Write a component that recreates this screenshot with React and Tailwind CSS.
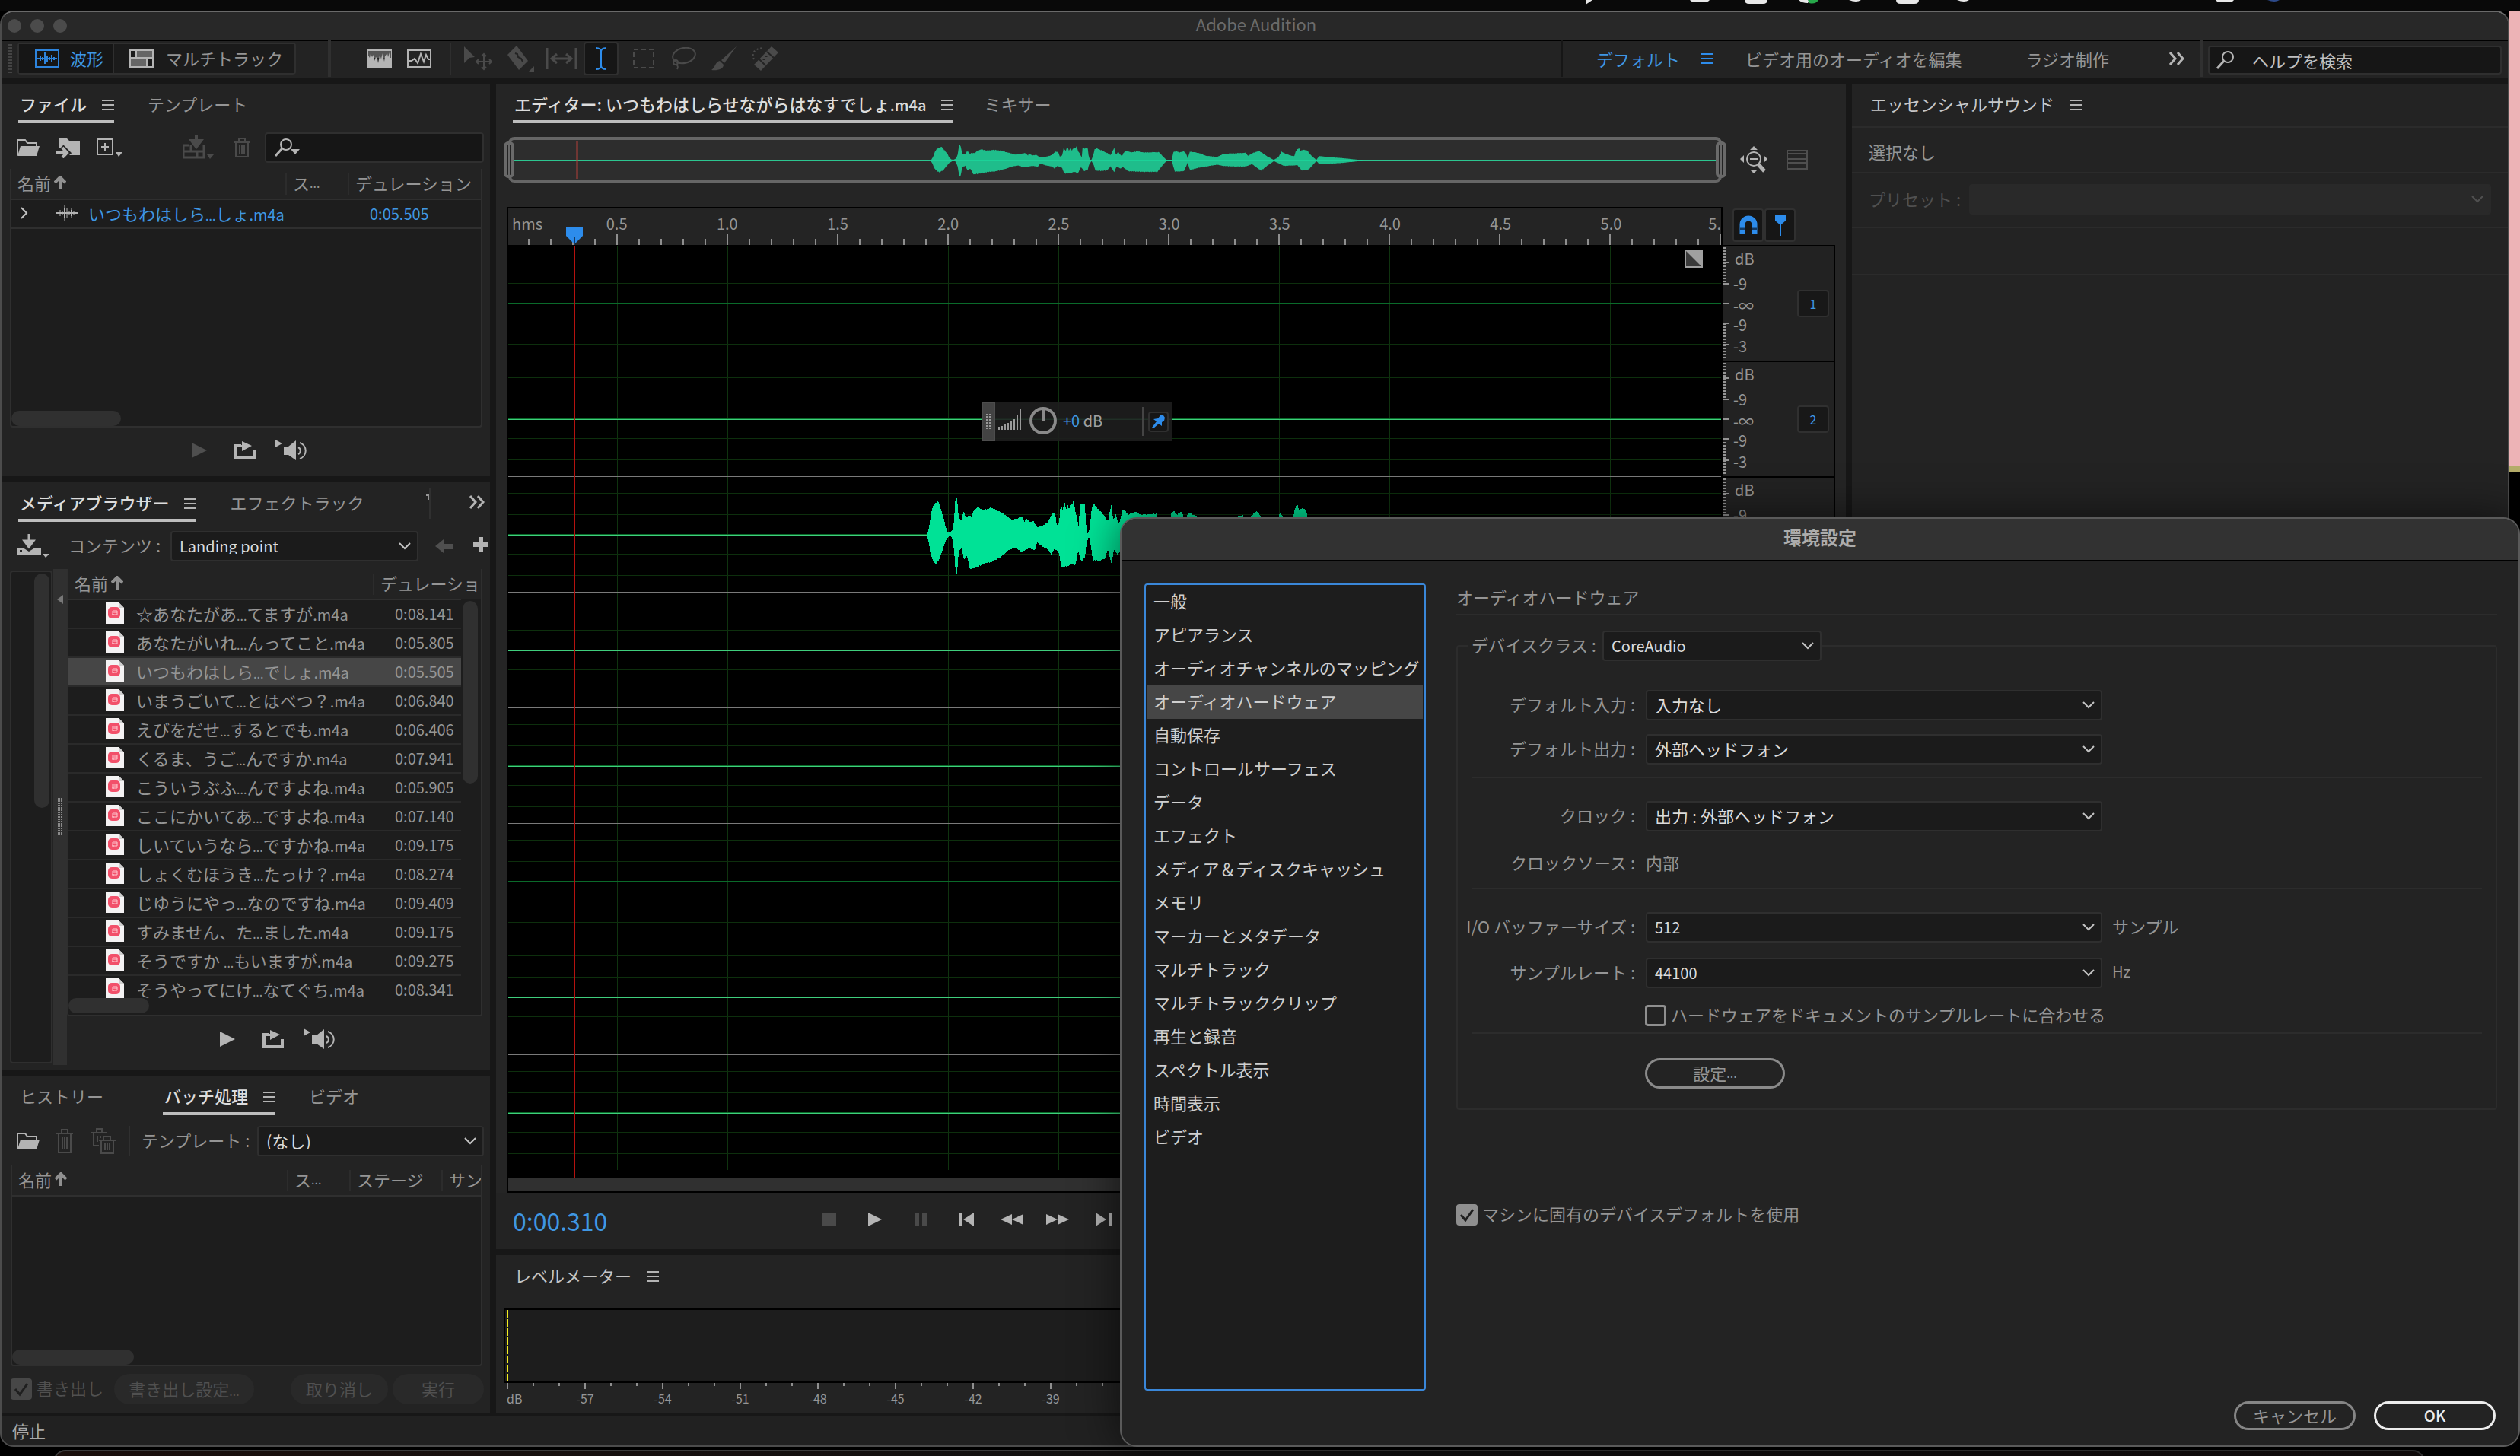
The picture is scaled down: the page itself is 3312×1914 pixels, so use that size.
import { useId } from 'react';

const FILES = [
  ['☆あなたがあ', 'てますが', '0:08.141'],
  ['あなたがいれ', 'んってこと', '0:05.805'],
  ['いつもわはしら', 'でしょ', '0:05.505'],
  ['いまうごいて', 'とはべつ？', '0:06.840'],
  ['えびをだせ', 'するとでも', '0:06.406'],
  ['くるま、うご', 'んですか', '0:07.941'],
  ['こういうぶふ', 'んですよね', '0:05.905'],
  ['ここにかいてあ', 'ですよね', '0:07.140'],
  ['しいていうなら', 'ですかね', '0:09.175'],
  ['しょくむほうき', 'たっけ？', '0:08.274'],
  ['じゆうにやっ', 'なのですね', '0:09.409'],
  ['すみません、た', 'ました', '0:09.175'],
  ['そうですか ', 'もいますが', '0:09.275'],
  ['そうやってにけ', 'なてぐち', '0:08.341'],
];

const CATEGORIES = [
  '一般',
  'アピアランス',
  'オーディオチャンネルのマッピング',
  'オーディオハードウェア',
  '自動保存',
  'コントロールサーフェス',
  'データ',
  'エフェクト',
  'メディア＆ディスクキャッシュ',
  'メモリ',
  'マーカーとメタデータ',
  'マルチトラック',
  'マルチトラッククリップ',
  '再生と録音',
  'スペクトル表示',
  '時間表示',
  'ビデオ',
];

const TIMES = ['0.5', '1.0', '1.5', '2.0', '2.5', '3.0', '3.5', '4.0', '4.5', '5.0'];
const LEVELS = [-57, -54, -51, -48, -45, -42, -39, -36, -33, -30, -27, -24, -21, -18, -15, -12];
const LANES = [0, 1, 2, 3, 4, 5, 6, 7];

// [x, amplitude] pairs of the voice clip, x in timeline units (290 per second)
const UPPER = [
  [550, 0], [551, 2], [554, 15], [556, 30], [559, 40], [565, 46], [569, 33], [573, 20], [575, 10], [578, 3],
  [581, 3], [584, 7], [586, 20], [588, 53], [589, 53], [591, 37], [592, 22], [596, 20], [598, 30], [600, 30],
  [601, 22], [604, 25], [609, 25], [612, 33], [617, 37], [625, 33], [634, 36], [644, 32], [652, 27], [662, 20],
  [670, 22], [675, 25], [679, 17], [680, 23], [685, 17], [690, 19], [695, 10], [702, 12], [709, 17], [712, 22],
  [715, 30], [719, 28], [721, 13], [724, 17], [726, 40], [729, 33], [731, 46], [733, 33], [735, 41], [737, 34],
  [739, 41], [742, 42], [743, 49], [745, 33], [748, 20], [750, 10], [751, 41], [758, 41], [759, 17], [761, 2],
  [763, 3], [765, 17], [767, 37], [770, 41], [775, 35], [784, 25], [788, 18], [790, 27], [793, 43], [794, 27],
  [796, 20], [798, 30], [800, 22], [803, 15], [807, 32], [810, 33], [815, 27], [824, 31], [832, 27], [852, 28],
  [854, 23], [858, 12], [862, 2], [869, 2], [871, 28], [875, 32], [879, 27], [885, 31], [888, 23], [890, 8],
  [893, 30], [905, 25], [914, 16], [929, 12], [937, 22], [959, 25], [966, 26], [970, 16], [976, 25], [984, 32],
  [989, 25], [995, 14], [1004, 2], [1010, 12], [1014, 30], [1018, 24], [1027, 16], [1031, 15], [1033, 32],
  [1037, 42], [1039, 33], [1044, 36], [1049, 33], [1050, 25], [1053, 18], [1060, 2], [1064, 15], [1077, 11],
  [1091, 9], [1106, 5], [1117, 2], [1121, 0],
];

const LOWER = [
  [550, 0], [553, 12], [555, 26], [559, 36], [562, 40], [567, 32], [571, 20], [575, 8], [579, 2], [583, 3],
  [586, 20], [588, 52], [590, 52], [592, 22], [596, 18], [599, 33], [603, 28], [607, 47], [611, 45], [617, 43],
  [625, 39], [636, 36], [647, 30], [658, 20], [666, 17], [674, 23], [685, 18], [692, 21], [695, 10], [702, 16],
  [710, 20], [714, 27], [718, 18], [724, 25], [727, 44], [731, 43], [736, 42], [740, 38], [745, 42], [749, 22],
  [753, 36], [758, 30], [760, 12], [763, 2], [766, 16], [768, 34], [777, 35], [784, 32], [788, 20], [793, 39],
  [796, 20], [801, 27], [804, 22], [812, 36], [833, 38], [850, 38], [858, 12], [862, 2], [869, 2], [873, 37],
  [885, 36], [890, 8], [893, 32], [905, 24], [929, 14], [937, 18], [949, 20], [967, 20], [975, 12], [987, 34],
  [995, 18], [1004, 2], [1017, 18], [1035, 16], [1041, 34], [1050, 30], [1060, 2], [1064, 12], [1091, 9],
  [1117, 2], [1121, 0],
];

const amp = (points, x) => {
  const i = points.findIndex((p) => p[0] >= x);
  if (i <= 0) return 0;
  const [x0, a0] = points[i - 1];
  const [x1, a1] = points[i];
  return a0 + ((a1 - a0) * (x - x0)) / (x1 - x0);
};

const rough = (x) => 0.98 + 0.05 * Math.sin(x * 12.9898) * Math.cos(x * 3.7);

const wavePath = (cy, scale) => {
  const top = [];
  const bottom = [];
  for (let x = 550; x <= 1121; x += 1) {
    top.push(`${x},${(cy - amp(UPPER, x) * scale * rough(x)).toFixed(1)}`);
    bottom.unshift(`${x},${(cy + amp(LOWER, x) * scale * rough(x + 1)).toFixed(1)}`);
  }
  return `M${top.join('L')}L${bottom.join('L')}Z`;
};

const Svg = ({ w, h, className = '', children }) => (
  <svg width={w} height={h} viewBox={`0 0 ${w} ${h}`} fill="none" stroke="currentColor" strokeWidth="2" className={`shrink-0 ${className}`} aria-hidden="true">
    {children}
  </svg>
);

const Menu = ({ className = '' }) => (
  <Svg w={16} h={16} className={className}>
    <path d="M0 2h16M0 8h16M0 14h16" />
  </Svg>
);

const Chevron = ({ className = '' }) => (
  <Svg w={16} h={10} className={className}>
    <path d="M1 1l7 7 7-7" />
  </Svg>
);

const More = () => (
  <Svg w={22} h={18}>
    <path d="M2 1l7 8-7 8M12 1l7 8-7 8" strokeWidth="3" />
  </Svg>
);

const Folder = () => (
  <Svg w={30} h={24} className="text-[#b4b4b4]">
    <path d="M1 22V2h10l3 4h12v4" />
    <path d="M5 10h25l-4 13H1z" fill="currentColor" stroke="none" />
  </Svg>
);

const Trash = ({ h = 26 }) => (
  <Svg w={22} h={h} className="text-[#4a4a4a]">
    <path d={`M0 6h22M7 5V1h8v4M3 6v${h - 7}h16V6M8 10v${h - 15}M11 10v${h - 15}M14 10v${h - 15}`} />
  </Svg>
);

const UpArrow = () => (
  <Svg w={16} h={18} className="ml-1 text-[#909090]">
    <path d="M8 18V4M1 9l7-7 7 7" strokeWidth="4" />
  </Svg>
);

const Magnifier = () => (
  <Svg w={26} h={26} className="text-[#b4b4b4]">
    <circle cx="16" cy="9" r="7" />
    <path d="M11 14L2 24" strokeWidth="3" />
  </Svg>
);

const WaveMark = () => (
  <Svg w={28} h={22}>
    <path d="M0 11h28M5 7v8M8 9v5M11 0v22M14 4v13M17 8v6M20 5v12M23 9v4" strokeWidth="1" />
    <path d="M0 11h28M11 4v14M20 7v8" />
  </Svg>
);

const Play = ({ dim }) => (
  <Svg w={20} h={20} className={dim ? 'text-[#4f4f4f]' : 'text-[#b4b4b4]'}>
    <path d="M0 0l20 10L0 20z" fill="currentColor" stroke="none" />
  </Svg>
);

const PreviewBar = ({ dim, className = '' }) => (
  <div className={`flex h-16 items-center gap-[36px] pb-1 ${className}`}>
    <button aria-label="再生">
      <Play dim={dim} />
    </button>
    <button aria-label="ループ再生">
      <Svg w={28} h={24} className="text-[#b4b4b4]">
        <path d="M9 6H2v16h24V12" strokeWidth="4" />
        <path d="M10 0l13 6-13 7V8H6V5h4z" fill="currentColor" stroke="none" />
      </Svg>
    </button>
    <button aria-label="自動再生" className="-ml-[10px]">
      <Svg w={42} h={28} className="text-[#b4b4b4]">
        <path d="M0 0l9 5-9 5z" fill="currentColor" stroke="none" />
        <path d="M11 9h6l10-8v26l-10-7h-6z" fill="currentColor" stroke="none" />
        <path d="M30 10a5 5 0 010 9M32 4a11 11 0 010 21" />
      </Svg>
    </button>
  </div>
);

const Tab = ({ active, menu, className = '', children }) => (
  <button
    className={`flex h-[52px] items-center gap-[20px] border-b-4 pt-1 whitespace-nowrap ${active ? 'border-[#bdbdbd] font-medium text-[#dcdcdc]' : 'border-transparent text-[#959595]'} ${className}`}
  >
    <span className="pl-[2px]">{children}</span>
    {menu && <Menu className="mt-1 text-[#b4b4b4]" />}
  </button>
);

const Select = ({ id, label, options, className = '', latin, disabled }) => (
  <span className={`relative flex h-10 items-center ${className}`}>
    <select
      id={id}
      aria-label={label}
      disabled={disabled}
      className={`h-10 w-full appearance-none rounded-[4px] border-2 pl-[10px] text-[#dcdcdc] ${latin ? 'text-[20px]' : 'pb-[3px] text-[22px]'} ${disabled ? 'border-[#292929] bg-[#292929]' : 'border-[#2f2f2f] bg-[#1b1b1b]'}`}
    >
      {options.map((o) => (
        <option key={o}>{o}</option>
      ))}
    </select>
    <Chevron className={`pointer-events-none absolute right-[10px] ${disabled ? 'text-[#505050]' : 'text-[#c4c4c4]'}`} />
  </span>
);

const Check = ({ label, checked, disabled, className = '' }) => (
  <label className={`flex items-center gap-[6px] whitespace-nowrap ${disabled ? 'text-[#505050]' : 'text-[#959595]'} ${className}`}>
    <span className="relative flex size-7">
      <input
        type="checkbox"
        defaultChecked={checked}
        disabled={disabled}
        className={`size-7 appearance-none rounded-[4px] border-[3px] ${disabled ? 'border-[#474747] checked:bg-[#474747]' : 'border-[#8f8f8f] checked:bg-[#8f8f8f]'}`}
      />
      {checked && (
        <Svg w={28} h={28} className="pointer-events-none absolute text-[#1f1f1f]">
          <path d="M6 14l6 7L22 7" strokeWidth="3" />
        </Svg>
      )}
    </span>
    <span className="pb-1">{label}</span>
  </label>
);

const Th = ({ className = '', bar, children }) => (
  <th className={`p-0 text-left font-normal ${className}`}>
    <span className={`flex h-7 items-center overflow-x-clip pb-1 pl-2 whitespace-nowrap ${bar ? 'border-l-2 border-[#2c2c2c]' : ''}`}>{children}</span>
  </th>
);

const Tool = ({ label, className = '', children }) => (
  <button aria-label={label} className={`flex h-11 w-[54px] items-center justify-center text-[#4a4a4a] ${className}`}>
    {children}
  </button>
);

const Toolbar = () => (
  <div className="flex h-12 items-center pb-[2px] text-[#959595]">
    <span className="ml-2 h-[38px] w-[6px] bg-[repeating-linear-gradient(#444_0_2px,transparent_2px_4px)]" />
    <div className="ml-[7px] flex h-[42px] rounded-[4px] border-2 border-[#2f2f2f]">
      <button className="flex items-center gap-[14px] border-r-2 border-[#2f2f2f] bg-[#161616] pr-[12px] pl-[21px] text-[#3f97e3]">
        <Svg w={32} h={24} className="text-[#2d84dd]">
          <path d="M1 1h30v22H1zM3 12h26M7 9v6M10 10v4M13 4v15M16 8v8M19 10v4M22 7v10M25 10v4" />
        </Svg>
        <span className="pb-[2px]">波形</span>
      </button>
      <button className="flex items-center gap-[16px] bg-[#1b1b1b] pr-[15px] pl-[20px]">
        <Svg w={32} h={24} className="text-[#b4b4b4]">
          <path d="M9 2h21v8H9zM2 13h20v9H2z" fill="#666" stroke="none" />
          <path d="M1 1h30v22H1zM1 11h30M9 1v10M23 11v12" />
        </Svg>
        <span className="pb-[2px]">マルチトラック</span>
      </button>
    </div>
    <span className="ml-[42px] h-12 w-1 bg-[#303030]" />
    <button aria-label="スペクトル周波数表示" className="ml-[48px] text-[#b4b4b4]">
      <Svg w={32} h={24}>
        <path d="M1 1h30v22H1z" />
        <path d="M1 2h30v9H1z" fill="#555" stroke="none" />
        <path d="M1 23V8l2 3 1-5 2 4 2-3 1 8 2-5 2 2 1 6 2-10 2 4 2-7 2 11 1-7 3-4 1 5 2-6v19z" fill="currentColor" stroke="none" />
      </Svg>
    </button>
    <button aria-label="スペクトルピッチ表示" className="ml-5 text-[#b4b4b4]">
      <Svg w={32} h={24}>
        <path d="M1 1h30v22H1zM2 15h4l4-3 4 6 4-12 4 10 3-9 3 6h2" />
      </Svg>
    </button>
    <span className="ml-6 h-[42px] w-[2px] bg-[#2e2e2e]" />
    <Tool label="移動ツール" className="ml-2">
      <Svg w={36} h={32}>
        <path d="M0 0l14 14-7 1-7 7z" fill="currentColor" stroke="none" />
        <path d="M26 11v18M17 20h18M23 13l3-3 3 3M23 27l3 3 3-3M19 17l-3 3 3 3M33 17l3 3-3 3" />
      </Svg>
    </Tool>
    <Tool label="切り取りツール" className="ml-[2px]">
      <Svg w={36} h={34}>
        <path d="M13 0L1 12l15 20 12-12z" fill="currentColor" stroke="none" />
        <path d="M11 10l3 1 1 4 4 2 2 4" stroke="#232323" />
        <path d="M36 27v7h-7z" fill="currentColor" stroke="none" />
      </Svg>
    </Tool>
    <Tool label="スリップツール">
      <Svg w={42} h={28}>
        <path d="M2 0v28M40 0v28" strokeWidth="3" />
        <path d="M9 14h24M15 8l-7 6 7 6M27 8l7 6-7 6" strokeWidth="3" />
      </Svg>
    </Tool>
    <button aria-label="時間選択ツール" className="ml-[2px] flex h-11 w-[46px] items-center justify-center rounded-[4px] border-2 border-[#303030] bg-[#161616] text-[#2d8ceb]">
      <Svg w={16} h={30}>
        <path d="M1 1c4 0 7 1 7 5v18c0 4-3 5-7 5M15 1c-4 0-7 1-7 5v18c0 4 3 5 7 5" />
      </Svg>
    </button>
    <Tool label="長方形選択ツール" className="ml-[6px]">
      <Svg w={28} h={26}>
        <path d="M1 1h26v24H1z" strokeDasharray="6 4" />
      </Svg>
    </Tool>
    <Tool label="なげなわ選択ツール" className="-ml-[2px]">
      <Svg w={34} h={30}>
        <ellipse cx="18" cy="11" rx="15" ry="10" transform="rotate(-12 18 11)" />
        <circle cx="7" cy="20" r="3" />
        <path d="M8 23c3 2 2 4 1 6" />
      </Svg>
    </Tool>
    <Tool label="ペイントブラシ選択ツール">
      <Svg w={34} h={32}>
        <path d="M33 0L17 22l-4-4zM11 19l5 5c0 6-8 8-16 7 5-3 5-11 11-12z" fill="currentColor" stroke="none" />
      </Svg>
    </Tool>
    <Tool label="スポット修復ブラシツール">
      <Svg w={36} h={32}>
        <path d="M26 0l9 8-23 24-9-8z" fill="currentColor" stroke="none" />
        <path d="M20 7l9 8M10 17l8 8" stroke="#232323" />
        <path d="M19 13v1M22 16v1M16 17v1M19 20v1" stroke="#232323" strokeWidth="3" />
        <path d="M3 17C-1 8 5 2 16 2" strokeDasharray="2 3" />
      </Svg>
    </Tool>
    <nav className="ml-auto flex h-12 items-center border-l-2 border-[#161616] pl-[44px] whitespace-nowrap">
      <a href="#default" className="flex items-center gap-[27px] text-[#3f97e3]">
        デフォルト
        <Menu className="text-[#2d8ceb]" />
      </a>
      <a href="#video" className="ml-[43px]">ビデオ用のオーディオを編集</a>
      <a href="#radio" className="ml-[84px]">ラジオ制作</a>
      <button aria-label="その他" className="ml-[78px] text-[#b4b4b4]">
        <More />
      </button>
    </nav>
    <span className="ml-[20px] h-12 w-1 bg-[#303030]" />
    <label className="mt-1 mr-2 ml-[6px] flex h-[38px] w-[386px] items-center gap-[22px] rounded-[4px] border-2 border-[#2f2f2f] bg-[#161616] pl-2">
      <Magnifier />
      <input aria-label="ヘルプを検索" placeholder="ヘルプを検索" className="w-full bg-transparent placeholder:text-[#c0c0c0]" />
    </label>
  </div>
);

const FilesPanel = () => (
  <section className="bg-[#232323]">
    <div className="flex h-14 gap-[42px] pl-[22px]">
      <Tab active menu>ファイル</Tab>
      <Tab>テンプレート</Tab>
    </div>
    <div className="mt-2 flex h-10 items-center pr-2 pl-5">
      <button aria-label="開く">
        <Folder />
      </button>
      <button aria-label="読み込み" className="ml-[22px] text-[#b4b4b4]">
        <Svg w={32} h={28}>
          <path d="M4 14V2h10l4 4h13v18H16z" fill="currentColor" stroke="none" />
          <path d="M0 20h11M7 13l8 8-8 7" stroke="#232323" strokeWidth="7" />
          <path d="M0 21h12M8 14l6 7-6 6" strokeWidth="4" />
        </Svg>
      </button>
      <button aria-label="新規" className="ml-[20px] text-[#b4b4b4]">
        <Svg w={36} h={28}>
          <path d="M2 3h20v20H2zM7 13h10M12 8v10" />
          <path d="M26 20h9l-5 6z" fill="currentColor" stroke="none" />
        </Svg>
      </button>
      <button aria-label="マルチトラックに挿入" className="ml-[78px] text-[#4a4a4a]">
        <Svg w={42} h={32}>
          <path d="M1 13h8M28 13v16H1V12M1 21h27M11 13v8M19 21v8" strokeWidth="3" />
          <path d="M18 0v8M18 15l-6-8h12z" strokeWidth="4" fill="currentColor" />
          <path d="M32 25h9l-5 6z" fill="currentColor" stroke="none" />
        </Svg>
      </button>
      <button aria-label="削除" className="ml-[25px]">
        <Trash />
      </button>
      <label className="ml-auto flex h-10 w-[288px] items-center rounded-[4px] border-2 border-[#2f2f2f] bg-[#161616] pl-[10px]">
        <Magnifier />
        <Svg w={12} h={8} className="mt-3 -ml-1 text-[#b4b4b4]">
          <path d="M0 0h12L6 7z" fill="currentColor" stroke="none" />
        </Svg>
        <input aria-label="ファイルを検索" className="w-full bg-transparent" />
      </label>
    </div>
    <div className="relative mt-2 mr-[10px] ml-[11px] h-[340px] rounded-b-[4px] border-2 border-t-0 border-[#2f2f2f] bg-[#1d1d1d]">
      <table className="w-full table-fixed border-collapse text-[#959595]">
        <thead>
          <tr className="h-10 border-b-2 border-[#2f2f2f] bg-[#232323]">
            <Th className="w-[360px]">名前<UpArrow /></Th>
            <Th bar className="w-[82px]">ス<span className="text-[16px]">...</span></Th>
            <Th bar>デュレーション</Th>
          </tr>
        </thead>
        <tbody>
          <tr className="h-[38px] border-b-2 border-[#2f2f2f] text-[#3f97e3]">
            <td className="p-0">
              <span className="flex items-center pb-[2px] whitespace-nowrap">
                <Svg w={10} h={16} className="ml-3 text-[#c4c4c4]">
                  <path d="M1 1l7 7-7 7" />
                </Svg>
                <span className="mr-[14px] ml-[37px] text-[#b4b4b4]">
                  <WaveMark />
                </span>
                <span>いつもわはしら<span className="text-[16px]">...</span>しょ<span className="text-[20px]">.m4a</span></span>
              </span>
            </td>
            <td />
            <td className="pl-[29px] text-[20px]">0:05.505</td>
          </tr>
        </tbody>
      </table>
      <span className="absolute bottom-0 left-0 h-5 w-[144px] rounded-full bg-[#303030]" />
    </div>
    <PreviewBar dim className="pl-[250px]" />
  </section>
);

const MediaFile = () => (
  <Svg w={24} h={28}>
    <path d="M0 0h17l7 7v21H0z" fill="#f4f2f3" stroke="none" />
    <path d="M17 0v7h7z" fill="#cfcfcf" stroke="none" />
    <rect x="3" y="6" width="16" height="15" rx="5" fill="#f2506a" stroke="none" />
    <path d="M9 11h6v5H9zM8 16h3M9 13h6" stroke="#ffc9d0" strokeWidth="1" />
  </Svg>
);

const MediaBrowser = () => (
  <section className="bg-[#232323]">
    <div className="flex h-14 items-center pl-[22px]">
      <Tab active menu className="-mt-1">メディアブラウザー</Tab>
      <Tab className="-mt-1 ml-[42px]">エフェクトラック</Tab>
      <span className="ml-auto h-10 w-[6px] overflow-hidden border-r-2 border-[#303030] text-[#959595]">
        <Svg w={4} h={12} className="mt-2">
          <path d="M0 1h4v6" />
        </Svg>
      </span>
      <button aria-label="その他" className="mr-[6px] ml-[50px] pb-1 text-[#b4b4b4]">
        <More />
      </button>
    </div>
    <div className="mt-2 flex h-10 items-center overflow-x-clip pl-5">
      <button aria-label="読み込み" className="text-[#b4b4b4]">
        <Svg w={44} h={32}>
          <path d="M0 18h8l8 5 8-5h8v9H0z" fill="currentColor" stroke="none" />
          <path d="M4 22h3" stroke="#232323" />
          <path d="M16 0v10M16 17l-6-8h12z" strokeWidth="3" fill="currentColor" />
          <path d="M34 26h9l-5 5z" fill="currentColor" stroke="none" />
        </Svg>
      </button>
      <label htmlFor="contents" className="ml-[24px] pb-1 text-[#959595]">コンテンツ :</label>
      <Select id="contents" latin options={['Landing point']} className="ml-auto w-[326px]" />
      <button aria-label="戻る" className="ml-[22px] text-[#4f4f4f]">
        <Svg w={24} h={18}>
          <path d="M11 0v6h13v7H11v5L0 9z" fill="currentColor" stroke="none" />
        </Svg>
      </button>
      <button aria-label="追加" className="mr-[2px] ml-[26px] pb-1 text-[#b4b4b4]">
        <Svg w={20} h={20}>
          <path d="M0 10h20M10 0v20" strokeWidth="6" />
        </Svg>
      </button>
    </div>
    <div className="mt-[10px] mb-[6px] flex pr-[10px] pl-[11px]">
      <div className="my-[2px] flex w-14 justify-end rounded-[4px] border-2 border-[#2f2f2f] bg-[#1d1d1d] p-[2px]">
        <span className="h-[308px] w-5 rounded-full bg-[#303030]" />
      </div>
      <div className="ml-[1px] flex w-[18px] flex-col items-center justify-center bg-[#303030]">
        <Svg w={8} h={12} className="mt-[34px] mb-auto text-[#777]">
          <path d="M8 0v12L0 6z" fill="currentColor" stroke="none" />
        </Svg>
        <span className="mb-[302px] h-[50px] w-[6px] bg-[repeating-linear-gradient(#303030_0_1px,transparent_1px_3px),repeating-linear-gradient(90deg,#8a8a8a_0_1px,transparent_1px_2px)]" />
      </div>
      <div className="min-w-0 flex-1">
        <div className="relative h-[588px] overflow-hidden rounded-b-[4px] border-2 border-t-0 border-[#2f2f2f] bg-[#1d1d1d]">
          <table className="w-full table-fixed border-collapse text-[#959595]">
            <thead>
              <tr className="h-10 border-b-2 border-[#2f2f2f] bg-[#232323]">
                <Th className="w-[400px]">名前<UpArrow /></Th>
                <Th bar>デュレーショ</Th>
              </tr>
            </thead>
            <tbody>
              {FILES.map(([head, tail, time], i) => (
                <tr key={head} className={`h-[38px] border-b-2 border-[#2a2a2a] ${i === 2 ? 'bg-[#464646]' : ''}`}>
                  <td className="p-0">
                    <span className="flex items-center gap-4 pb-[2px] pl-[49px] whitespace-nowrap">
                      <MediaFile />
                      <span>{head}<span className="text-[16px]">...</span>{tail}<span className="text-[20px]">.m4a</span></span>
                    </span>
                  </td>
                  <td className="pl-[29px] text-[20px]">{time}</td>
                </tr>
              ))}
            </tbody>
          </table>
          <div className="absolute top-10 right-0 bottom-0 w-[26px] bg-[#1d1d1d] p-[2px]">
            <div className="h-[240px] w-5 rounded-full bg-[#303030]" />
          </div>
          <div className="absolute right-0 bottom-0 left-0 h-[22px] bg-[#1d1d1d]">
            <div className="h-5 w-[106px] rounded-full bg-[#303030]" />
          </div>
        </div>
        <PreviewBar className="pl-[201px]" />
      </div>
    </div>
  </section>
);

const BatchPanel = () => (
  <section className="flex flex-1 flex-col bg-[#232323]">
    <div className="flex h-14 pl-[22px]">
      <Tab>ヒストリー</Tab>
      <Tab active menu className="ml-[78px]">バッチ処理</Tab>
      <Tab className="ml-[42px]">ビデオ</Tab>
    </div>
    <div className="mt-[10px] flex h-10 items-center pr-2 pl-5">
      <button aria-label="開く">
        <Folder />
      </button>
      <button aria-label="削除" className="ml-[22px]">
        <Trash h={32} />
      </button>
      <button aria-label="すべて削除" className="ml-[24px] text-[#4a4a4a]">
        <Svg w={32} h={34}>
          <path d="M0 6h21M7 5V1h7v4M3 6v17h7M8 10v8M12 10v3" />
          <path d="M10 16h22M16 15v-4h9v4M13 16v17h16V16M18 20v9M21 20v9M24 20v9" />
        </Svg>
      </button>
      <span className="ml-[17px] h-10 w-[2px] bg-[#303030]" />
      <label htmlFor="template" className="ml-[15px] pb-1 text-[#959595]">テンプレート :</label>
      <Select id="template" options={['(なし)']} className="ml-auto w-[298px]" />
    </div>
    <div className="relative mt-3 mr-[10px] ml-[12px] flex-1 rounded-b-[4px] border-2 border-t-0 border-[#2f2f2f] bg-[#1d1d1d]">
      <table className="w-full table-fixed border-collapse text-[#959595]">
        <thead>
          <tr className="h-10 border-b-2 border-[#2f2f2f] bg-[#232323]">
            <Th className="w-[361px]">名前<UpArrow /></Th>
            <Th bar className="w-[82px]">ス<span className="text-[16px]">...</span></Th>
            <Th bar className="w-[121px]">ステージ</Th>
            <Th bar>サン</Th>
          </tr>
        </thead>
      </table>
      <span className="absolute bottom-0 left-0 h-5 w-[160px] rounded-full bg-[#303030]" />
    </div>
    <div className="mt-[10px] mb-3 flex h-10 items-center pr-2 pl-3 text-[#505050]">
      <Check label="書き出し" checked disabled />
      <button className="ml-[14px] h-10 w-[184px] rounded-full bg-[#292929] pb-[2px]">書き出し設定<span className="text-[16px]">...</span></button>
      <button className="ml-auto h-10 w-[128px] rounded-full bg-[#292929] pb-[2px]">取り消し</button>
      <button className="ml-[6px] h-10 w-[120px] rounded-full bg-[#292929] pb-[2px]">実行</button>
    </div>
  </section>
);

const Handle = () => (
  <span className="flex h-12 w-[14px] rounded-[6px] border-4 border-[#6a6a6a] bg-[#232323]">
    <span className="mx-auto w-[2px] bg-[#6a6a6a]" />
  </span>
);

const Overview = () => (
  <div className="mt-[14px] flex items-center pl-[10px]">
    <div className="relative flex h-[60px] flex-1 items-center">
      <div className="mx-[6px] h-[60px] flex-1 rounded-[8px] border-4 border-[#666] bg-[#2d2d2d]">
        <svg className="h-full w-full" viewBox="-4 0 1596 52" preserveAspectRatio="none" aria-hidden="true">
          <path d="M0 27h1590" stroke="#2cc690" strokeWidth="2" />
          <path d={wavePath(27, 0.4)} fill="#1fbd8b" />
          <path d="M551 27h570" stroke="#19e8a6" strokeWidth="1" />
          <path d="M83 1v50" stroke="#b3413a" strokeWidth="2" />
        </svg>
      </div>
      <span className="absolute left-0">
        <Handle />
      </span>
      <span className="absolute right-0">
        <Handle />
      </span>
    </div>
    <div className="flex w-[157px] items-center pl-[18px]">
      <button aria-label="全体表示" className="text-[#b4b4b4]">
        <Svg w={36} h={36}>
          <circle cx="18" cy="17" r="9" />
          <path d="M13 17h10" />
          <path d="M24 24l8 9" strokeWidth="5" />
          <path d="M18 0l5 5H13zM18 36l5-5H13zM0 17l5-5v10zM36 17l-5-5v10z" fill="currentColor" stroke="none" />
        </Svg>
      </button>
      <button aria-label="レイヤー表示" className="ml-[25px] text-[#4f4f4f]">
        <Svg w={28} h={26}>
          <path d="M1 1h26v24H1zM1 5h26M1 12h26M1 17h26" />
        </Svg>
      </button>
    </div>
  </div>
);

const TimeRuler = () => (
  <div className="relative h-12 overflow-hidden bg-[#242424]">
    <div className="flex h-10 items-center text-[20px] text-[#959595]">
      <span className="w-[70px] shrink-0 pl-[5px]">hms</span>
      {TIMES.map((t) => (
        <span key={t} className="min-w-0 flex-1 text-center">{t}</span>
      ))}
      <span className="flex w-[72px] shrink-0 justify-end">5.</span>
    </div>
    <svg className="absolute inset-0 h-12 w-full text-[#8f8f8f]" viewBox="0 0 1594 48" preserveAspectRatio="none" stroke="currentColor" strokeWidth="2" aria-hidden="true">
      {Array.from({ length: 55 }, (_, i) => i + 1).map((i) => (
        <path key={i} d={`M${i * 29 - 2} ${i % 5 ? 40 : 34}V48`} />
      ))}
      <path d="M76 24h22v12L87 47 76 36z" fill="#2d8ceb" stroke="none" />
      <path d="M87 38v10" stroke="#123a66" />
    </svg>
  </div>
);

const Lanes = () => (
  <svg className="block min-h-[1226px] w-full flex-1 bg-black" viewBox="0 0 1594 1226" preserveAspectRatio="none" shapeRendering="crispEdges" aria-hidden="true">
    {TIMES.map((t, i) => (
      <path key={t} d={`M${143.5 + i * 145} 2V1216`} stroke="#0f330f" />
    ))}
    {LANES.map((n) => (
      <g key={n} transform={`translate(0 ${n * 152})`}>
        <path d="M0 22.5h1594M0 50.5h1594M0 102.5h1594M0 130.5h1594" stroke="#0d2f0d" />
        <path d="M0 76.5h1594" stroke="#0a6a2a" />
        <path d="M0 77.5h1594" stroke="#3fce7c" />
        {n < 7 && <path d="M0 152.5h1594" stroke="#7a7a7a" />}
      </g>
    ))}
    <path d={wavePath(381, 1)} fill="#00e296" />
    <path d="M87 2V1226" stroke="#b4120f" strokeWidth="2" />
  </svg>
);

const Hud = () => (
  <div className="absolute top-[254px] left-[622px] flex h-[52px] w-[250px] items-center bg-[#1e1e1e]/90">
    <span className="flex h-[52px] w-[18px] items-center justify-center border-2 border-[#4d4d4d] bg-[#434343]">
      <span className="h-5 w-[6px] border-x-2 border-dotted border-[#999]" />
    </span>
    <Svg w={32} h={30} className="mb-[6px] ml-[3px] text-[#999]">
      <path d="M2 29v-4M6 29v-5M10 29v-7M14 29v-9M18 29v-11M22 29V15M26 29V9M30 29V1" />
    </Svg>
    <Svg w={36} h={36} className="mb-[2px] ml-[10px] text-[#8a8a8a]">
      <circle cx="18" cy="18" r="16" strokeWidth="4" />
      <path d="M18 3v15" strokeWidth="4" />
    </Svg>
    <span className="ml-2 pb-[2px] text-[20px] whitespace-pre text-[#a0a0a0]"><span className="text-[#3f97e3]">+0</span> dB</span>
    <span className="mr-[6px] ml-auto h-[38px] w-[2px] bg-[#444]" />
    <button aria-label="固定" className="mr-1 flex size-[27px] items-center justify-center rounded-[4px] border-2 border-[#303030] bg-[#161616] text-[#2d8ceb]">
      <Svg w={18} h={18}>
        <path d="M11 1l4 0 2 3-1 4-3 2v5l-4-3-7 6-2-1 6-8-4-3 6-1z" fill="currentColor" stroke="none" />
      </Svg>
    </button>
  </div>
);

const ScaleLane = ({ n }) => (
  <div className="flex h-[152px] border-b-2 border-black text-[20px] text-[#959595]">
    <Svg w={10} h={150}>
      <path d="M0 21h9M0 49h9M0 75h9M0 101h9M0 129h9" />
      <path d="M2 1v48M2 101v48" strokeWidth="4" strokeDasharray="2 2" />
    </Svg>
    <div className="flex flex-1 flex-col pl-1">
      <span className="flex h-8 items-center pl-[2px]">dB</span>
      <span className="flex h-[34px] items-center">-9</span>
      <span className="flex h-6 items-center">-∞</span>
      <span className="flex h-[26px] items-center">-9</span>
      <span className="flex h-[30px] items-center">-3</span>
    </div>
    <button className="mt-[57px] mr-[6px] flex h-9 w-[42px] items-center justify-center rounded-[4px] border-2 border-[#303030] bg-[#181818] text-[16px] text-[#3f97e3]">{n}</button>
  </div>
);

const TRANSPORT = [
  ['停止', 18, 'M0 0h18v18H0z', true],
  ['再生', 18, 'M0 0l18 9L0 18z', false],
  ['一時停止', 18, 'M1 0h6v18H1zM11 0h6v18h-6z', true],
  ['先頭へ', 21, 'M0 0h4v18H0zM20 0v18L6 9z', false],
  ['巻き戻し', 30, 'M15 2v14L0 9zM30 2v14L15 9z', false],
  ['早送り', 30, 'M0 2v14l15-7zM15 2v14l15-7z', false],
  ['末尾へ', 21, 'M0 0v18l14-9zM17 0h4v18h-4z', false],
  ['録音', 18, 'M9 0a9 9 0 100 18 9 9 0 000-18z', false],
];

const EditorPanel = () => (
  <section className="flex flex-1 flex-col bg-[#252525]">
    <div className="flex h-14 gap-[38px] pl-[22px]">
      <Tab active menu>エディター: いつもわはしらせながらはなすでしょ<span className="text-[20px]">.m4a</span></Tab>
      <Tab>ミキサー</Tab>
    </div>
    <Overview />
    <div className="mt-8 flex flex-1 pl-[14px]">
      <div className="relative flex flex-1 flex-col border-2 border-black">
        <TimeRuler />
        <Lanes />
        <div className="h-[18px] bg-[#303030]" />
        <Hud />
        <Svg w={24} h={24} className="absolute top-[54px] right-6">
          <path d="M0 0h24v24H0z" fill="#a0a0a0" stroke="none" />
          <path d="M2 2l20 20H2z" fill="#3a3a3a" stroke="none" />
        </Svg>
      </div>
      <div className="mr-[14px] flex w-[148px] flex-col">
        <div className="flex h-[50px] gap-[1px] pt-[2px] pl-[13px] text-[#2d8ceb]">
          <button aria-label="スナップ" className="flex h-11 w-[41px] items-center justify-center rounded-[4px] border-2 border-[#303030] bg-[#161616]">
            <Svg w={24} h={26}>
              <path d="M4 25V12a8 8 0 0116 0v13" strokeWidth="7" />
              <path d="M1 18h7M16 18h7" stroke="#123a66" strokeWidth="3" />
            </Svg>
          </button>
          <button aria-label="再生ヘッドを固定" className="flex h-11 w-[41px] items-center justify-center rounded-[4px] border-2 border-[#303030] bg-[#161616]">
            <Svg w={16} h={28}>
              <path d="M1 0h14v8l-7 6-7-6z" fill="currentColor" stroke="none" />
              <path d="M8 8v20" />
            </Svg>
          </button>
        </div>
        <div className="flex-1 border-t-2 border-r-2 border-black bg-[#222]">
          {LANES.map((n) => (
            <ScaleLane key={n} n={n + 1} />
          ))}
        </div>
      </div>
    </div>
    <div className="flex h-[74px] items-center bg-[#232323] pb-[2px] pl-[22px]">
      <span className="w-[386px] text-[32px] text-[#3f97e3]">0:00.310</span>
      {TRANSPORT.map(([label, w, d, dim]) => (
        <button key={label} aria-label={label} className={`flex w-[60px] justify-center pb-[2px] ${dim ? 'text-[#4a4a4a]' : 'text-[#b4b4b4]'}`}>
          <Svg w={w} h={18}>
            <path d={d} fill="currentColor" stroke="none" />
          </Svg>
        </button>
      ))}
    </div>
  </section>
);

const LevelPanel = () => (
  <section className="h-[208px] overflow-hidden bg-[#232323]">
    <h2 className="flex h-14 items-center gap-[20px] pb-1 pl-[24px] text-[#c4c4c4]">
      レベルメーター
      <Menu className="mt-1 text-[#b4b4b4]" />
    </h2>
    <div className="mt-[14px] ml-[10px] h-[98px] border-2 border-black bg-[#1d1d1d] pl-[2px]">
      <div className="h-full w-[2px] bg-[repeating-linear-gradient(#f5ee1e_0_10px,transparent_10px_12px)]" />
    </div>
    <Svg w={1740} h={8} className="ml-[14px] text-[#8f8f8f]">
      {Array.from({ length: 50 }, (_, i) => (
        <path key={i} d={`M${1 + i * 34} 0V${i % 3 ? 4 : 8}`} />
      ))}
    </Svg>
    <div className="flex pl-[14px] text-[16px] leading-6 text-[#959595]">
      <span className="w-[52px] shrink-0">dB</span>
      {LEVELS.map((n) => (
        <span key={n} className="w-[102px] shrink-0 text-center">{n}</span>
      ))}
    </div>
  </section>
);

const SoundPanel = () => (
  <section className="w-[862px] bg-[#232323]">
    <h2 className="flex h-[58px] items-center gap-[20px] border-b-2 border-[#2b2b2b] pb-1 pl-[24px] text-[#c8c8c8]">
      エッセンシャルサウンド
      <Menu className="mt-1 text-[#b4b4b4]" />
    </h2>
    <p className="flex h-[60px] items-center border-b-2 border-[#2b2b2b] pt-1 pl-[22px] text-[#959595]">選択なし</p>
    <div className="flex h-[72px] items-center border-b-2 border-[#2b2b2b] pr-[22px] pb-[3px] pl-[22px] text-[#505050]">
      <label htmlFor="preset" className="w-[132px] shrink-0 pb-[2px]">プリセット :</label>
      <Select id="preset" disabled options={['']} className="flex-1" />
    </div>
    <div className="h-[62px] border-b-2 border-[#2b2b2b]" />
  </section>
);

const Field = ({ label, value, unit, className = '' }) => {
  const id = useId();
  return (
    <div className={`flex h-10 items-center ${className}`}>
      <label htmlFor={id} className="mr-[14px] w-[233px] pb-1 text-right whitespace-nowrap">{label} :</label>
      <Select id={id} options={[value]} latin={/^\d+$/.test(value)} className="w-[600px]" />
      {unit && <span className={`ml-[13px] pb-1 ${unit === 'Hz' ? 'text-[20px]' : ''}`}>{unit}</span>}
    </div>
  );
};

const Preferences = () => (
  <div role="dialog" aria-label="環境設定" className="absolute top-[680px] right-0 bottom-3 flex w-[1840px] flex-col rounded-[22px] border-2 border-[#5a5a5a] bg-[#232323] shadow-[0_0_60px_rgba(0,0,0,0.6)]">
    <h1 className="flex h-[56px] items-center justify-center rounded-t-[20px] border-b-2 border-black bg-[#323232] pb-[6px] text-[24px] font-bold text-[#acacac]">環境設定</h1>
    <div className="flex min-h-0 flex-1 pt-[29px] pr-[28px] pl-[30px]">
      <ul className="w-[370px] shrink-0 rounded-[4px] border-2 border-[#3a87d9] bg-[#1d1d1d] px-[2px] text-[#cfcfcf]">
        {CATEGORIES.map((c, i) => (
          <li key={c} className={i === 3 ? 'bg-[#464646]' : ''}>
            <button className="flex h-11 w-full items-center pb-1 pl-2 whitespace-nowrap">{c}</button>
          </li>
        ))}
      </ul>
      <div className="ml-10 flex-1 text-[#959595]">
        <h2 className="flex h-[42px] items-center border-b-2 border-[#2c2c2c] pb-[6px]">オーディオハードウェア</h2>
        <fieldset className="mt-5 rounded-[4px] border-2 border-[#2c2c2c] pb-[26px]">
          <legend className="ml-[14px] flex items-center pl-1">
            <label htmlFor="device-class" className="mr-2 w-[164px] pb-1 whitespace-nowrap">デバイスクラス :</label>
            <Select id="device-class" latin options={['CoreAudio']} className="w-[288px]" />
          </legend>
          <Field label="デフォルト入力" value="入力なし" className="mt-[38px]" />
          <Field label="デフォルト出力" value="外部ヘッドフォン" className="mt-[18px]" />
          <hr className="mx-[18px] mt-4 border-t-2 border-[#2c2c2c]" />
          <Field label="クロック" value="出力 : 外部ヘッドフォン" className="mt-[30px]" />
          <div className="mt-[22px] flex h-10 items-center pb-1">
            <span className="mr-[14px] w-[233px] text-right">クロックソース :</span>
            内部
          </div>
          <hr className="mx-[18px] mt-3 border-t-2 border-[#2c2c2c]" />
          <Field label="I/O バッファーサイズ" value="512" unit="サンプル" className="mt-[30px]" />
          <Field label="サンプルレート" value="44100" unit="Hz" className="mt-5" />
          <Check label="ハードウェアをドキュメントのサンプルレートに合わせる" className="mt-[22px] ml-[246px] h-7" />
          <hr className="mx-[18px] mt-2 border-t-2 border-[#2c2c2c]" />
          <button className="mt-8 ml-[246px] flex h-10 w-[184px] items-center justify-center rounded-full border-[3px] border-[#8a8a8a] pb-[2px]">設定<span className="text-[16px]">...</span></button>
        </fieldset>
        <Check label="マシンに固有のデバイスデフォルトを使用" checked className="mt-[124px] h-7" />
      </div>
    </div>
    <div className="mt-[14px] mb-[20px] flex justify-end gap-6 pr-[30px]">
      <button className="flex h-[38px] w-[160px] items-center justify-center rounded-full border-[3px] border-[#858585] pb-[2px] text-[#959595]">キャンセル</button>
      <button className="flex h-[38px] w-[160px] items-center justify-center rounded-full border-[3px] border-[#ececec] text-[20px] font-medium text-[#ececec]">OK</button>
    </div>
  </div>
);

const App = () => {
  return (
    <div className="relative flex min-h-screen flex-col overflow-hidden bg-black font-['Noto_Sans_CJK_JP','Noto_Sans',sans-serif] text-[22px] leading-none">
      <div className="flex h-[14px] justify-end bg-[#090909] pr-[104px]">
        <Svg w={1124} h={6} className="text-[#e8e8e8]">
          <path d="M0 0h9L0 6zM137 0h26q-2 3-8 3h-10q-6 0-8-3zM209 0h30q0 5-6 5h-18q-6 0-6-5zM280 0h14l-2 4q-8 0-12-4zM346 0h16q-6 4-16 0zM408 0h30q0 5-6 5h-18q-6 0-6-5zM488 0h16q-6 4-16 0zM828 0h24q-2 3-6 3h-12q-4 0-6-3z" fill="currentColor" stroke="none" />
          <path d="M292 0h14q-4 6-12 4z" fill="#27a84a" stroke="none" />
          <path d="M896 0h16q-6 4-16 0z" fill="#2d4a8a" stroke="none" />
        </Svg>
      </div>
      <div className="flex flex-1">
        <div className="flex min-w-0 flex-1 flex-col overflow-hidden rounded-[18px] border-2 border-[#4c4c4c] border-t-[#6a6a6a] bg-[#171717]">
          <header className="flex h-[38px] items-center border-b-2 border-black bg-[#282828] pr-1">
            <span className="flex flex-1 gap-3 pl-2">
              <button aria-label="閉じる" className="size-[18px] rounded-full bg-[#4b4b4b]" />
              <button aria-label="しまう" className="size-[18px] rounded-full bg-[#4b4b4b]" />
              <button aria-label="拡大" className="size-[18px] rounded-full bg-[#4b4b4b]" />
            </span>
            <span className="pb-[6px] text-[22px] text-[#6b6b6b]">Adobe Audition</span>
            <span className="flex-1" />
          </header>
          <div className="bg-[#232323]">
            <Toolbar />
          </div>
          <main className="mt-2 flex flex-1 gap-2">
            <div className="flex w-[642px] shrink-0 flex-col gap-2">
              <FilesPanel />
              <MediaBrowser />
              <BatchPanel />
            </div>
            <div className="flex min-w-0 flex-1 flex-col gap-2">
              <EditorPanel />
              <LevelPanel />
            </div>
            <SoundPanel />
          </main>
          <footer className="mt-1 flex h-[38px] items-center bg-[#212121] pb-[2px] pl-[14px] text-[#a8a8a8]">停止</footer>
        </div>
        <div className="w-[14px]">
          <div className="h-[598px] bg-[#edb3b6]" />
          <div className="h-2 bg-[#b5ad6a]" />
        </div>
      </div>
      <div className="h-3 overflow-hidden pt-1 pr-[125px] pl-[70px]">
        <div className="h-8 rounded-[22px] border-2 border-[#3c3c3c] bg-linear-to-r from-[#1a0f0c] via-[#111] to-[#140e0e]" />
      </div>
      <Preferences />
    </div>
  );
};

export default App;
